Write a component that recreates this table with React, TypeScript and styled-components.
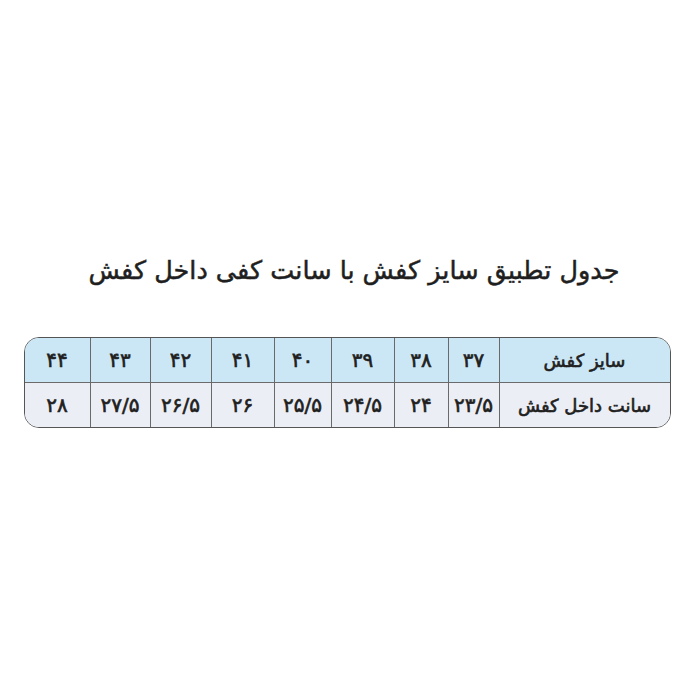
import styled, { createGlobalStyle } from "styled-components";

const GlobalStyle = createGlobalStyle`
  html, body {
    margin: 0;
    padding: 0;
    background: #ffffff;
  }
  body {
    font-family: "DejaVu Sans", "Noto Sans", sans-serif;
  }
`;

const Page = styled.div`
  width: 700px;
  height: 700px;
  box-sizing: border-box;
  padding-top: 250px;
  display: flex;
  flex-direction: column;
  align-items: center;
  direction: rtl;
`;

const Title = styled.h1`
  margin: 0 0 0 8px;
  font-size: 25.5px;
  font-weight: 400;
  -webkit-text-stroke: 0.5px #1f1f1f;
  color: #1f1f1f;
  line-height: 40px;
  text-align: center;
`;

const Table = styled.div`
  margin-top: 47px;
  margin-right: 6px;
  display: grid;
  grid-template-columns: 171px 51px 54px 63px 57px 63px 61px 60px 65px;
  grid-template-rows: 45px 44px;
  border: 1.5px solid #555;
  border-radius: 15px;
  overflow: hidden;
  box-sizing: border-box;
`;

const Cell = styled.div<{ $head?: boolean; $first?: boolean; $label?: boolean }>`
  display: flex;
  align-items: center;
  justify-content: center;
  background: ${(p) => (p.$head ? "#cbe7f5" : "#eceef5")};
  border-left: ${(p) => (p.$first ? "none" : "1px solid #6a6a6a")};
  border-bottom: ${(p) => (p.$head ? "1px solid #6a6a6a" : "none")};
  font-size: ${(p) => (p.$label ? "18px" : "20px")};
  font-weight: 400;
  -webkit-text-stroke: 0.6px #202020;
  color: #202020;
`;

const sizes = ["۳۷", "۳۸", "۳۹", "۴۰", "۴۱", "۴۲", "۴۳", "۴۴"];
const cms = ["۲۳/۵", "۲۴", "۲۴/۵", "۲۵/۵", "۲۶", "۲۶/۵", "۲۷/۵", "۲۸"];

export default function App() {
  return (
    <>
      <GlobalStyle />
      <Page>
        <Title>جدول تطبیق سایز کفش با سانت کفی داخل کفش</Title>
        <Table>
          <Cell $head $label>سایز کفش</Cell>
          {sizes.map((s, i) => (
            <Cell key={s} $head $first={i === sizes.length - 1}>{s}</Cell>
          ))}
          <Cell $label>سانت داخل کفش</Cell>
          {cms.map((c, i) => (
            <Cell key={c} $first={i === cms.length - 1}>{c}</Cell>
          ))}
        </Table>
      </Page>
    </>
  );
}
